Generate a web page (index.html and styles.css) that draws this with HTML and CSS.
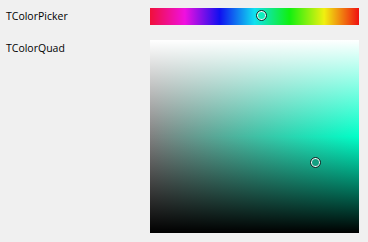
FILE: index.html
```html
<!DOCTYPE html>
<html>
<head>
<meta charset="utf-8">
<link rel="stylesheet" href="styles.css">
</head>
<body>
<div class="form">
  <div class="label">TColorPicker</div>
  <div class="hue-bar">
    <div class="thumb" style="left:106px;top:2px;background:rgb(16,240,190)"></div>
  </div>
  <div class="label">TColorQuad</div>
  <div class="quad">
    <div class="thumb" style="left:160px;top:117px;background:rgb(20,160,130)"></div>
  </div>
</div>
</body>
</html>
```
FILE: styles.css
```css
html, body {
  margin: 0;
  padding: 0;
  background: #f0f0f0;
  width: 368px;
  height: 242px;
  overflow: hidden;
}
.form {
  display: grid;
  grid-template-columns: 144px 209px;
  row-gap: 15px;
  padding: 8px 0 0 6px;
  font-family: "Open Sans", "Noto Sans", sans-serif;
  font-size: 10.5px;
  color: #000;
}
.label {
  line-height: 16px;
}
.hue-bar {
  position: relative;
  height: 17px;
  background: linear-gradient(to right,
    #f0103a 0%, #f010e0 16.67%, #1010f0 33.33%, #10e0f0 50%,
    #10f010 66.67%, #f0f010 83.33%, #f01010 100%);
}
.quad {
  position: relative;
  height: 193px;
  background:
    linear-gradient(to bottom, #ffffff 0%, rgba(255,255,255,0) 50%, rgba(0,0,0,0) 50%, #000000 100%),
    linear-gradient(to right, #808080 0%, rgb(0,255,200) 100%);
}
.thumb {
  position: absolute;
  width: 11px;
  height: 11px;
  box-sizing: border-box;
  border-radius: 50%;
  border: 1px solid #1c2a2a;
  box-shadow: inset 0 0 0 1px #ffffff;
}
```
